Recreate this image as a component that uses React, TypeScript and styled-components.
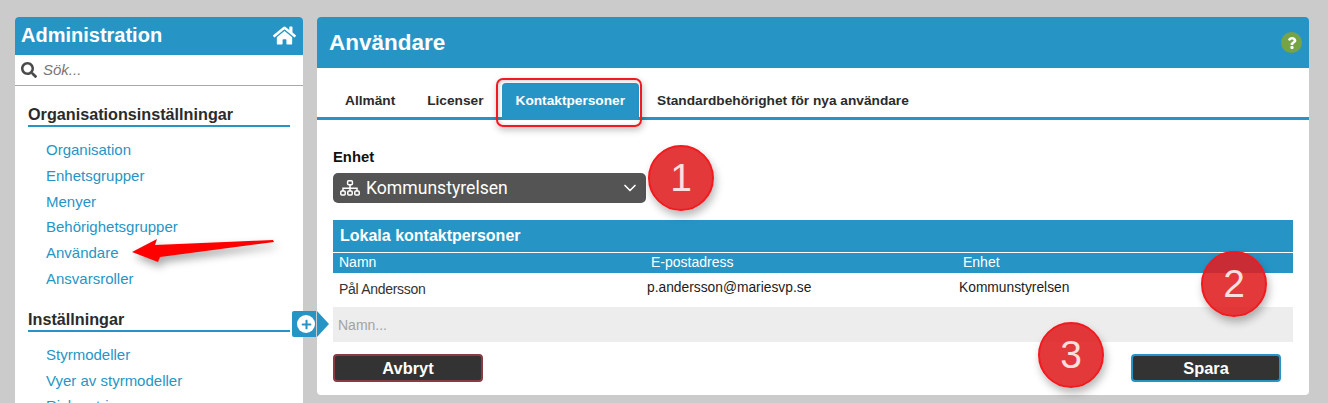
import React from "react";
import styled, { createGlobalStyle } from "styled-components";
import { FaHome, FaSearch, FaQuestion, FaPlus } from "react-icons/fa";
import { ChevronDown } from "lucide-react";

const BLUE = "#2695c6";

const GlobalStyle = createGlobalStyle`
  html, body {
    margin: 0;
    padding: 0;
    background: #cbcbcb;
    font-family: "Liberation Sans", Arial, sans-serif;
    overflow: hidden;
  }
  * { box-sizing: border-box; }
`;

const Page = styled.div`
  position: relative;
  width: 1328px;
  height: 403px;
  padding: 17px 19px 0 15px;
  display: flex;
  align-items: flex-start;
  gap: 14px;
  overflow: hidden;
`;

const Sidebar = styled.aside`
  width: 288px;
  flex: none;
  background: #fff;
  border-radius: 4px 4px 0 0;
`;

const SidebarHeader = styled.div`
  height: 38px;
  background: ${BLUE};
  border-radius: 4px 4px 0 0;
  color: #fff;
  display: flex;
  align-items: center;
  justify-content: space-between;
  padding: 0 7px 2px 6px;
  font-size: 20px;
  font-weight: bold;
  svg { font-size: 23px; }
`;

const SearchBar = styled.div`
  height: 31px;
  border-bottom: 1px solid #a8a8a8;
  display: flex;
  align-items: center;
  gap: 6px;
  padding: 0 6px 1px;
  color: #4a4a4a;
  svg { font-size: 16px; flex: none; }
`;

const SearchInput = styled.input`
  border: none;
  outline: none;
  flex: 1;
  min-width: 0;
  padding: 0;
  font: italic 15px "Liberation Sans", Arial, sans-serif;
  &::placeholder { color: #777; opacity: 1; }
`;

const NavBody = styled.div`
  padding: 15px 13px 0;
`;

const NavSection = styled.section`
  margin-bottom: 14px;
`;

const NavHeading = styled.h3`
  margin: 0 0 10px;
  height: 26px;
  line-height: 27px;
  font-size: 16.2px;
  font-weight: bold;
  color: #2b2b2b;
  border-bottom: 2px solid ${BLUE};
`;

const NavLink = styled.a`
  display: block;
  height: 25.8px;
  line-height: 25.8px;
  padding-left: 18px;
  font-size: 15px;
  color: ${BLUE};
`;

const Main = styled.main`
  position: relative;
  flex: 1;
  height: 378px;
  background: #fff;
  border-radius: 4px;
`;

const MainHeader = styled.div`
  height: 51px;
  background: ${BLUE};
  border-radius: 4px 4px 0 0;
  display: flex;
  align-items: center;
  justify-content: space-between;
  padding: 0 7px 0 12px;
  color: #fff;
  font-size: 22.5px;
  font-weight: bold;
`;

const HelpBadge = styled.span`
  width: 21px;
  height: 21px;
  border-radius: 50%;
  background: #76a444;
  color: #fff;
  display: flex;
  align-items: center;
  justify-content: center;
  font-size: 12px;
`;

const Tabs = styled.nav`
  height: 52px;
  padding: 15px 14px 0;
  display: flex;
  gap: 4px;
  border-bottom: 3px solid ${BLUE};
`;

const Tab = styled.div<{ $active?: boolean }>`
  height: 34px;
  padding: 0 14px;
  line-height: 36px;
  font-size: 13.7px;
  font-weight: bold;
  border-radius: 4px 4px 0 0;
  color: ${(p) => (p.$active ? "#fff" : "#2b2b2b")};
  background: ${(p) => (p.$active ? BLUE : "transparent")};
`;

const Content = styled.div`
  padding: 29px 16px 0;
`;

const FieldLabel = styled.label`
  display: block;
  height: 24px;
  line-height: 17px;
  font-size: 14.8px;
  font-weight: bold;
  color: #111;
`;

const SelectBox = styled.div`
  width: 313px;
  height: 30px;
  background: #545454;
  border-radius: 5px;
  color: #fff;
  display: flex;
  align-items: center;
  padding: 0 6px 0 7px;
  gap: 6px;
  font-family: Roboto, "Liberation Sans", sans-serif;
  font-size: 17.6px;
  span { flex: 1; }
`;

const TableBlock = styled.div`
  margin-top: 17px;
`;

const TableTitle = styled.div`
  height: 32px;
  line-height: 31px;
  padding-left: 7px;
  background: ${BLUE};
  color: #fff;
  font-size: 16px;
  font-weight: bold;
`;

const ColumnRow = styled.div`
  display: grid;
  grid-template-columns: 312px 312px 1fr;
  height: 20px;
  margin-top: 1px;
  line-height: 18px;
  background: ${BLUE};
  color: #fff;
  font-size: 14px;
  div { padding-left: 6px; }
`;

const DataRow = styled.div`
  display: grid;
  grid-template-columns: 312px 312px 1fr;
  height: 34px;
  line-height: 30px;
  font-size: 13.8px;
  color: #1c1c1c;
  div { padding-left: 2px; }
  div:first-child { padding-left: 6px; line-height: 32px; color: #333; letter-spacing: -0.3px; font-size: 14px; }
`;

const AddInput = styled.input`
  display: block;
  width: 100%;
  height: 35px;
  border: none;
  outline: none;
  padding: 0 5px;
  background: #ededed;
  font: 14px "Liberation Sans", Arial, sans-serif;
  &::placeholder { color: #a3a3a3; opacity: 1; }
`;

const ButtonRow = styled.div`
  display: flex;
  justify-content: space-between;
  padding-right: 12px;
  margin-top: 12px;
`;

const ActionButton = styled.button<{ $tone: string }>`
  width: 150px;
  height: 28px;
  background: #333;
  border: 2px solid ${(p) => p.$tone};
  border-radius: 4px;
  color: #fff;
  padding: 0;
  font: bold 16.4px "Liberation Sans", Arial, sans-serif;
`;

const AddTag = styled.div`
  position: absolute;
  left: -25px;
  top: 294px;
  width: 24px;
  height: 26px;
  background: ${BLUE};
  border-radius: 2px 0 0 2px;
  display: flex;
  align-items: center;
  justify-content: center;
  &::after {
    content: "";
    position: absolute;
    left: 25px;
    top: 0;
    border-left: 12px solid ${BLUE};
    border-top: 13px solid transparent;
    border-bottom: 13px solid transparent;
  }
`;

const PlusCircle = styled.span`
  position: relative;
  left: 2px;
  width: 18px;
  height: 18px;
  border-radius: 50%;
  background: #fff;
  color: ${BLUE};
  display: flex;
  align-items: center;
  justify-content: center;
  font-size: 11px;
`;

const Badge = styled.div<{ $x: number; $y: number }>`
  position: absolute;
  left: ${(p) => p.$x - 33}px;
  top: ${(p) => p.$y - 33}px;
  width: 66px;
  height: 66px;
  border-radius: 50%;
  background: rgba(224, 30, 32, 0.88);
  border: 2px solid #f11a1f;
  box-shadow: 2px 5px 9px rgba(0, 0, 0, 0.28);
  color: #fbdede;
  display: flex;
  align-items: center;
  justify-content: center;
  font-family: "Liberation Sans", Arial, sans-serif;
  font-size: 39px;
`;

const TabHighlight = styled.div`
  position: absolute;
  left: 496px;
  top: 78px;
  width: 146px;
  height: 49px;
  border: 2px solid #f01a20;
  border-radius: 7px;
  box-shadow: 1px 3px 7px rgba(0, 0, 0, 0.25), inset 1px 1px 4px rgba(0, 0, 0, 0.2);
`;

const ArrowMark = styled.svg`
  position: absolute;
  left: 125px;
  top: 232px;
  overflow: visible;
  filter: drop-shadow(3px 5px 4px rgba(0, 0, 0, 0.35));
`;

const orgLinks = ["Organisation", "Enhetsgrupper", "Menyer", "Behörighetsgrupper", "Användare", "Ansvarsroller"];
const settingLinks = ["Styrmodeller", "Vyer av styrmodeller", "Riskmatriser"];
const tabs = ["Allmänt", "Licenser", "Kontaktpersoner", "Standardbehörighet för nya användare"];

function OrgIcon() {
  return (
    <svg width="20" height="16" viewBox="0 0 20 16" fill="none" stroke="#fff" strokeWidth="1.5">
      <rect x="7.6" y="0.8" width="4.8" height="4" rx="1" />
      <path d="M10 5v6M3 11V8.2h14V11" />
      <rect x="0.8" y="11" width="4.4" height="4" rx="1" />
      <rect x="7.8" y="11" width="4.4" height="4" rx="1" />
      <rect x="14.8" y="11" width="4.4" height="4" rx="1" />
    </svg>
  );
}

export default function App() {
  return (
    <Page>
      <GlobalStyle />
      <Sidebar>
        <SidebarHeader>
          Administration
          <FaHome />
        </SidebarHeader>
        <SearchBar>
          <FaSearch />
          <SearchInput placeholder="Sök..." />
        </SearchBar>
        <NavBody>
          <NavSection>
            <NavHeading>Organisationsinställningar</NavHeading>
            {orgLinks.map((l) => (
              <NavLink key={l}>{l}</NavLink>
            ))}
          </NavSection>
          <NavSection>
            <NavHeading>Inställningar</NavHeading>
            {settingLinks.map((l) => (
              <NavLink key={l}>{l}</NavLink>
            ))}
          </NavSection>
        </NavBody>
      </Sidebar>
      <Main>
        <MainHeader>
          Användare
          <HelpBadge>
            <FaQuestion />
          </HelpBadge>
        </MainHeader>
        <Tabs>
          {tabs.map((t) => (
            <Tab key={t} $active={t === "Kontaktpersoner"}>
              {t}
            </Tab>
          ))}
        </Tabs>
        <Content>
          <FieldLabel>Enhet</FieldLabel>
          <SelectBox>
            <OrgIcon />
            <span>Kommunstyrelsen</span>
            <ChevronDown size={20} strokeWidth={2} />
          </SelectBox>
          <TableBlock>
            <TableTitle>Lokala kontaktpersoner</TableTitle>
            <ColumnRow>
              <div>Namn</div>
              <div>E-postadress</div>
              <div>Enhet</div>
            </ColumnRow>
            <DataRow>
              <div>Pål Andersson</div>
              <div>p.andersson@mariesvp.se</div>
              <div>Kommunstyrelsen</div>
            </DataRow>
            <AddInput placeholder="Namn..." />
          </TableBlock>
          <ButtonRow>
            <ActionButton $tone="#8a3b44">Avbryt</ActionButton>
            <ActionButton $tone={BLUE}>Spara</ActionButton>
          </ButtonRow>
        </Content>
        <AddTag>
          <PlusCircle>
            <FaPlus />
          </PlusCircle>
        </AddTag>
      </Main>
      <ArrowMark width="150" height="32" viewBox="0 0 150 32">
        <polygon points="7,20 32,7 30,13 148,8 149,10 35,25 33,30" fill="#ff0000" />
      </ArrowMark>
      <TabHighlight />
      <Badge $x={681} $y={178}>1</Badge>
      <Badge $x={1234} $y={284}>2</Badge>
      <Badge $x={1071} $y={355}>3</Badge>
    </Page>
  );
}
